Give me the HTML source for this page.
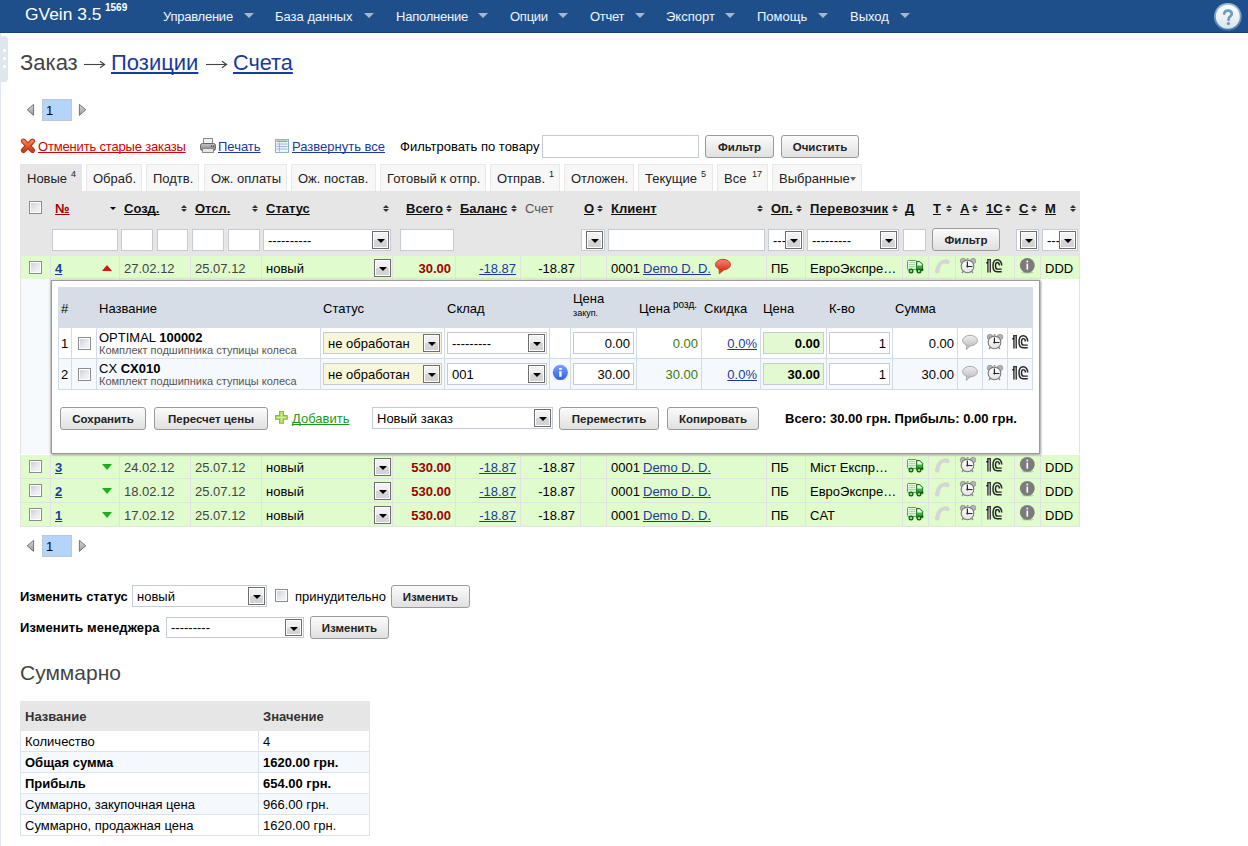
<!DOCTYPE html><html><head><meta charset="utf-8"><style>
html,body{margin:0;padding:0;}
body{width:1248px;height:846px;overflow:hidden;position:relative;background:#fff;font-family:"Liberation Sans",sans-serif;}
.t{position:absolute;white-space:nowrap;text-decoration-skip-ink:none;}
.r{position:absolute;}
.cb{position:absolute;width:11px;height:11px;border:1px solid #8c8c8c;background:linear-gradient(135deg,#c6cbd6 0%,#e6e8ec 50%,#f7f7f7 100%);box-shadow:inset 0 0 0 1px #fff;}
.sb{position:absolute;border:1px solid #6d6d6d;background:linear-gradient(#f4f4f4 0%,#ececec 50%,#d6d6d6 51%,#d2d2d2 100%);box-shadow:inset 0 0 0 1px #fff;}
.sb i{position:absolute;left:50%;top:50%;margin-left:-4px;margin-top:-1px;width:0;height:0;border-left:4px solid transparent;border-right:4px solid transparent;border-top:4px solid #000;}
.btn{position:absolute;box-sizing:border-box;border:1px solid #9a9a9a;border-radius:3px;background:linear-gradient(#fbfbfb,#e0e0e0);text-align:center;font-weight:bold;color:#222;white-space:nowrap;}
a{color:inherit}
</style></head><body><div class="r" style="left:0px;top:0px;width:1248px;height:33px;background:#1f4f8a;"></div>
<div class="r" style="left:0px;top:32px;width:1248px;height:1px;background:#15427a;"></div>
<div class="t " style="left:25px;top:4px;font-size:17.4px;line-height:20px;color:#fff;">GVein 3.5</div>
<div class="t " style="left:105px;top:2px;font-size:10px;line-height:11px;color:#fff;font-weight:bold;">1569</div>
<div class="t " style="left:163px;top:9px;font-size:13px;line-height:15px;color:#f2f5f9;letter-spacing:-0.24px;">Управление</div>
<div class="r" style="left:244px;top:13px;width:0;height:0;border-left:5.0px solid transparent;border-right:5.0px solid transparent;border-top:5px solid #a6b8d0;"></div>
<div class="t " style="left:275px;top:9px;font-size:13px;line-height:15px;color:#f2f5f9;">База данных</div>
<div class="r" style="left:364px;top:13px;width:0;height:0;border-left:5.0px solid transparent;border-right:5.0px solid transparent;border-top:5px solid #a6b8d0;"></div>
<div class="t " style="left:396px;top:9px;font-size:13px;line-height:15px;color:#f2f5f9;letter-spacing:-0.22px;">Наполнение</div>
<div class="r" style="left:478px;top:13px;width:0;height:0;border-left:5.0px solid transparent;border-right:5.0px solid transparent;border-top:5px solid #a6b8d0;"></div>
<div class="t " style="left:510px;top:9px;font-size:13px;line-height:15px;color:#f2f5f9;letter-spacing:-0.25px;">Опции</div>
<div class="r" style="left:558px;top:13px;width:0;height:0;border-left:5.0px solid transparent;border-right:5.0px solid transparent;border-top:5px solid #a6b8d0;"></div>
<div class="t " style="left:590px;top:9px;font-size:13px;line-height:15px;color:#f2f5f9;letter-spacing:-0.3px;">Отчет</div>
<div class="r" style="left:635px;top:13px;width:0;height:0;border-left:5.0px solid transparent;border-right:5.0px solid transparent;border-top:5px solid #a6b8d0;"></div>
<div class="t " style="left:666px;top:9px;font-size:13px;line-height:15px;color:#f2f5f9;">Экспорт</div>
<div class="r" style="left:725px;top:13px;width:0;height:0;border-left:5.0px solid transparent;border-right:5.0px solid transparent;border-top:5px solid #a6b8d0;"></div>
<div class="t " style="left:757px;top:9px;font-size:13px;line-height:15px;color:#f2f5f9;">Помощь</div>
<div class="r" style="left:818px;top:13px;width:0;height:0;border-left:5.0px solid transparent;border-right:5.0px solid transparent;border-top:5px solid #a6b8d0;"></div>
<div class="t " style="left:850px;top:9px;font-size:13px;line-height:15px;color:#f2f5f9;">Выход</div>
<div class="r" style="left:900px;top:13px;width:0;height:0;border-left:5.0px solid transparent;border-right:5.0px solid transparent;border-top:5px solid #a6b8d0;"></div>
<svg class="r" style="left:1212px;top:2px" width="31" height="31" viewBox="0 0 31 31"><defs><linearGradient id="hr" x1="0" y1="0" x2="0" y2="1"><stop offset="0" stop-color="#9dc0de"/><stop offset="1" stop-color="#3f74a8"/></linearGradient><linearGradient id="hf" x1="0" y1="0" x2="0" y2="1"><stop offset="0" stop-color="#ffffff"/><stop offset="1" stop-color="#d8e4ee"/></linearGradient></defs><circle cx="15.8" cy="14.8" r="13.9" fill="url(#hr)"/><circle cx="15.8" cy="14.8" r="12" fill="url(#hf)"/><path d="M12.2 11.8 C12.2 9.4 13.8 8.6 15.9 8.6 C18.2 8.6 19.8 9.8 19.8 11.8 C19.8 13.8 18 14.4 17 15.7 C16.6 16.3 16.5 16.9 16.5 18" fill="none" stroke="#6c9cc6" stroke-width="2.6" stroke-linecap="round"/><circle cx="16.4" cy="21.6" r="1.6" fill="#6c9cc6"/></svg>
<div class="r" style="left:0px;top:33px;width:1px;height:813px;background:#dfe6ee;"></div>
<div class="r" style="left:0px;top:36px;width:8px;height:46px;background:#dfe6ee;border-radius:0 4px 4px 0;"></div>
<div class="r" style="left:3px;top:49px;width:3px;height:3px;background:#fff;border-radius:1px;"></div>
<div class="r" style="left:3px;top:57px;width:3px;height:3px;background:#fff;border-radius:1px;"></div>
<div class="r" style="left:3px;top:65px;width:3px;height:3px;background:#fff;border-radius:1px;"></div>
<div class="t " style="left:20px;top:50px;font-size:22px;line-height:25px;color:#444;">Заказ</div>
<div class="t " style="left:111px;top:50px;font-size:22px;line-height:25px;color:#1a3a9e;text-decoration:underline;">Позиции</div>
<div class="t " style="left:233px;top:50px;font-size:21.7px;line-height:25px;color:#1a3a9e;text-decoration:underline;">Счета</div>
<svg class="r" style="left:83.5px;top:58px" width="22" height="14" viewBox="0 0 22 14"><line x1="0" y1="6.5" x2="20.5" y2="6.5" stroke="#444" stroke-width="1.1"/><polyline points="16,3.2 20.6,6.5 16,9.8" fill="none" stroke="#444" stroke-width="1.2"/></svg>
<svg class="r" style="left:205.5px;top:58px" width="22" height="14" viewBox="0 0 22 14"><line x1="0" y1="6.5" x2="20.5" y2="6.5" stroke="#444" stroke-width="1.1"/><polyline points="16,3.2 20.6,6.5 16,9.8" fill="none" stroke="#444" stroke-width="1.2"/></svg>
<svg class="r" style="left:22px;top:99px" width="70" height="22" viewBox="0 0 70 22"><defs><linearGradient id="pga" x1="0" y1="0" x2="0" y2="1"><stop offset="0" stop-color="#d8d8d8"/><stop offset="1" stop-color="#9a9a9a"/></linearGradient></defs><polygon points="11.6,5.4 5.2,10.8 11.6,16.4" fill="url(#pga)" stroke="#6a6a6a" stroke-width="0.9" stroke-linejoin="round"/><polygon points="57.4,5.4 63.8,10.8 57.4,16.4" fill="url(#pga)" stroke="#6a6a6a" stroke-width="0.9" stroke-linejoin="round"/></svg>
<div class="r" style="left:42px;top:99px;width:30px;height:22px;background:#b4d4fa;border:1px solid #bfc8d2;box-sizing:border-box;"></div>
<div class="t " style="left:46px;top:103px;font-size:13px;line-height:15px;color:#000;">1</div>
<svg class="r" style="left:19px;top:136px" width="20" height="20" viewBox="0 0 20 20"><defs><linearGradient id="xg" x1="0" y1="0" x2="0" y2="1"><stop offset="0" stop-color="#f08050"/><stop offset="1" stop-color="#d03c18"/></linearGradient></defs><g stroke-linecap="round"><line x1="4.4" y1="5.2" x2="13.5" y2="14.4" stroke="#b8301a" stroke-width="5.2"/><line x1="13.5" y1="5.2" x2="4.4" y2="14.4" stroke="#b8301a" stroke-width="5.2"/><line x1="4.4" y1="5.2" x2="13.5" y2="14.4" stroke="url(#xg)" stroke-width="3.2"/><line x1="13.5" y1="5.2" x2="4.4" y2="14.4" stroke="url(#xg)" stroke-width="3.2"/></g></svg>
<div class="t " style="left:38px;top:139px;font-size:13px;line-height:15px;color:#d40000;text-decoration:underline;letter-spacing:-0.17px;">Отменить старые заказы</div>
<svg class="r" style="left:200px;top:138px" width="18" height="17" viewBox="0 0 18 17"><defs><linearGradient id="pg" x1="0" y1="0" x2="0" y2="1"><stop offset="0" stop-color="#c8c8c8"/><stop offset="1" stop-color="#7a7a7a"/></linearGradient></defs><rect x="3.5" y="0.5" width="9" height="6" fill="#f2f2f2" stroke="#8a8a8a"/><rect x="0.5" y="5.5" width="15" height="7" rx="2" fill="url(#pg)" stroke="#666"/><rect x="2.5" y="10.5" width="11" height="4" fill="#e6e6e6" stroke="#8a8a8a"/><rect x="11" y="7.5" width="1.2" height="1.2" fill="#333"/><rect x="13" y="7.5" width="1.2" height="1.2" fill="#333"/></svg>
<div class="t " style="left:218px;top:139px;font-size:13px;line-height:15px;color:#1a3a9e;text-decoration:underline;">Печать</div>
<svg class="r" style="left:275px;top:139px" width="15" height="15" viewBox="0 0 15 15"><rect x="0.5" y="0.5" width="13" height="13" fill="#eef4fb" stroke="#8eb0da"/><rect x="1.5" y="1.5" width="11" height="1.5" fill="#72c05e"/><g stroke="#9bb8de" stroke-width="1"><line x1="1.5" y1="5" x2="12.5" y2="5"/><line x1="1.5" y1="7.5" x2="12.5" y2="7.5"/><line x1="1.5" y1="10" x2="12.5" y2="10"/><line x1="4.5" y1="3.5" x2="4.5" y2="12.5"/></g></svg>
<div class="t " style="left:292px;top:139px;font-size:13px;line-height:15px;color:#1a3a9e;text-decoration:underline;">Развернуть все</div>
<div class="t " style="left:400px;top:139px;font-size:13px;line-height:15px;color:#000;">Фильтровать по товару</div>
<div class="r" style="left:542px;top:135px;width:157px;height:23px;background:#fff;border:1px solid #c5cbd3;box-sizing:border-box;"></div>
<div class="btn" style="left:705px;top:135px;width:69px;height:23px;line-height:23px;font-size:11.5px;">Фильтр</div>
<div class="btn" style="left:781px;top:135px;width:78px;height:23px;line-height:23px;font-size:11.5px;">Очистить</div>
<div class="r" style="left:20px;top:164px;width:62px;height:27px;background:#e6e6e6;"></div>
<div class="t " style="left:27px;top:171px;font-size:13px;line-height:15px;color:#222;">Новые</div>
<div class="r" style="left:86px;top:164px;width:56px;height:27px;background:#f7f7f7;border:1px solid #e8e8e8;border-bottom:none;box-sizing:border-box;"></div>
<div class="t " style="left:93px;top:171px;font-size:13px;line-height:15px;color:#222;">Обраб.</div>
<div class="r" style="left:146px;top:164px;width:53px;height:27px;background:#f7f7f7;border:1px solid #e8e8e8;border-bottom:none;box-sizing:border-box;"></div>
<div class="t " style="left:153px;top:171px;font-size:13px;line-height:15px;color:#222;">Подтв.</div>
<div class="r" style="left:204px;top:164px;width:83px;height:27px;background:#f7f7f7;border:1px solid #e8e8e8;border-bottom:none;box-sizing:border-box;"></div>
<div class="t " style="left:211px;top:171px;font-size:13px;line-height:15px;color:#222;">Ож. оплаты</div>
<div class="r" style="left:291px;top:164px;width:85px;height:27px;background:#f7f7f7;border:1px solid #e8e8e8;border-bottom:none;box-sizing:border-box;"></div>
<div class="t " style="left:298px;top:171px;font-size:13px;line-height:15px;color:#222;">Ож. постав.</div>
<div class="r" style="left:380px;top:164px;width:106px;height:27px;background:#f7f7f7;border:1px solid #e8e8e8;border-bottom:none;box-sizing:border-box;"></div>
<div class="t " style="left:387px;top:171px;font-size:13px;line-height:15px;color:#222;">Готовый к отпр.</div>
<div class="r" style="left:490px;top:164px;width:70px;height:27px;background:#f7f7f7;border:1px solid #e8e8e8;border-bottom:none;box-sizing:border-box;"></div>
<div class="t " style="left:497px;top:171px;font-size:13px;line-height:15px;color:#222;">Отправ.</div>
<div class="r" style="left:564px;top:164px;width:70px;height:27px;background:#f7f7f7;border:1px solid #e8e8e8;border-bottom:none;box-sizing:border-box;"></div>
<div class="t " style="left:571px;top:171px;font-size:13px;line-height:15px;color:#222;">Отложен.</div>
<div class="r" style="left:638px;top:164px;width:75px;height:27px;background:#f7f7f7;border:1px solid #e8e8e8;border-bottom:none;box-sizing:border-box;"></div>
<div class="t " style="left:645px;top:171px;font-size:13px;line-height:15px;color:#222;">Текущие</div>
<div class="r" style="left:717px;top:164px;width:51px;height:27px;background:#f7f7f7;border:1px solid #e8e8e8;border-bottom:none;box-sizing:border-box;"></div>
<div class="t " style="left:724px;top:171px;font-size:13px;line-height:15px;color:#222;">Все</div>
<div class="r" style="left:772px;top:164px;width:90px;height:27px;background:#f7f7f7;border:1px solid #e8e8e8;border-bottom:none;box-sizing:border-box;"></div>
<div class="t " style="left:779px;top:171px;font-size:13px;line-height:15px;color:#222;">Выбранные</div>
<div class="t " style="left:71px;top:169px;font-size:9px;line-height:10px;color:#222;">4</div>
<div class="t " style="left:549px;top:169px;font-size:9px;line-height:10px;color:#222;">1</div>
<div class="t " style="left:701px;top:169px;font-size:9px;line-height:10px;color:#222;">5</div>
<div class="t " style="left:752px;top:169px;font-size:9px;line-height:10px;color:#222;">17</div>
<div class="r" style="left:850px;top:177px;width:0;height:0;border-left:3.5px solid transparent;border-right:3.5px solid transparent;border-top:4px solid #666;"></div>
<div class="r" style="left:20px;top:191px;width:1060px;height:65px;background:#e6e6e6;"></div>
<div class="cb" style="left:29px;top:201px;"></div>
<div class="t " style="left:55px;top:201px;font-size:13px;line-height:15px;color:#a00000;font-weight:bold;text-decoration:underline;">№</div>
<div class="r" style="left:110px;top:207px;width:0;height:0;border-left:3.0px solid transparent;border-right:3.0px solid transparent;border-top:3px solid #000;"></div>
<div class="t " style="left:124px;top:201px;font-size:13px;line-height:15px;color:#111;font-weight:bold;text-decoration:underline;">Созд.</div>
<div class="r" style="left:181px;top:205px;width:0;height:0;border-left:3.0px solid transparent;border-right:3.0px solid transparent;border-bottom:3px solid #333;"></div>
<div class="r" style="left:181px;top:209px;width:0;height:0;border-left:3.0px solid transparent;border-right:3.0px solid transparent;border-top:3px solid #333;"></div>
<div class="t " style="left:195px;top:201px;font-size:13px;line-height:15px;color:#111;font-weight:bold;text-decoration:underline;">Отсл.</div>
<div class="r" style="left:252px;top:205px;width:0;height:0;border-left:3.0px solid transparent;border-right:3.0px solid transparent;border-bottom:3px solid #333;"></div>
<div class="r" style="left:252px;top:209px;width:0;height:0;border-left:3.0px solid transparent;border-right:3.0px solid transparent;border-top:3px solid #333;"></div>
<div class="t " style="left:266px;top:201px;font-size:13px;line-height:15px;color:#111;font-weight:bold;text-decoration:underline;">Статус</div>
<div class="r" style="left:383px;top:205px;width:0;height:0;border-left:3.0px solid transparent;border-right:3.0px solid transparent;border-bottom:3px solid #333;"></div>
<div class="r" style="left:383px;top:209px;width:0;height:0;border-left:3.0px solid transparent;border-right:3.0px solid transparent;border-top:3px solid #333;"></div>
<div class="t " style="left:406px;top:201px;font-size:13px;line-height:15px;color:#111;font-weight:bold;text-decoration:underline;">Всего</div>
<div class="r" style="left:446px;top:205px;width:0;height:0;border-left:3.0px solid transparent;border-right:3.0px solid transparent;border-bottom:3px solid #333;"></div>
<div class="r" style="left:446px;top:209px;width:0;height:0;border-left:3.0px solid transparent;border-right:3.0px solid transparent;border-top:3px solid #333;"></div>
<div class="t " style="left:460px;top:201px;font-size:13px;line-height:15px;color:#111;font-weight:bold;text-decoration:underline;">Баланс</div>
<div class="r" style="left:511px;top:205px;width:0;height:0;border-left:3.0px solid transparent;border-right:3.0px solid transparent;border-bottom:3px solid #333;"></div>
<div class="r" style="left:511px;top:209px;width:0;height:0;border-left:3.0px solid transparent;border-right:3.0px solid transparent;border-top:3px solid #333;"></div>
<div class="t " style="left:584px;top:201px;font-size:13px;line-height:15px;color:#111;font-weight:bold;text-decoration:underline;">О</div>
<div class="r" style="left:597px;top:205px;width:0;height:0;border-left:3.0px solid transparent;border-right:3.0px solid transparent;border-bottom:3px solid #333;"></div>
<div class="r" style="left:597px;top:209px;width:0;height:0;border-left:3.0px solid transparent;border-right:3.0px solid transparent;border-top:3px solid #333;"></div>
<div class="t " style="left:611px;top:201px;font-size:13px;line-height:15px;color:#111;font-weight:bold;text-decoration:underline;">Клиент</div>
<div class="r" style="left:757px;top:205px;width:0;height:0;border-left:3.0px solid transparent;border-right:3.0px solid transparent;border-bottom:3px solid #333;"></div>
<div class="r" style="left:757px;top:209px;width:0;height:0;border-left:3.0px solid transparent;border-right:3.0px solid transparent;border-top:3px solid #333;"></div>
<div class="t " style="left:771px;top:201px;font-size:13px;line-height:15px;color:#111;font-weight:bold;text-decoration:underline;">Оп.</div>
<div class="r" style="left:796px;top:205px;width:0;height:0;border-left:3.0px solid transparent;border-right:3.0px solid transparent;border-bottom:3px solid #333;"></div>
<div class="r" style="left:796px;top:209px;width:0;height:0;border-left:3.0px solid transparent;border-right:3.0px solid transparent;border-top:3px solid #333;"></div>
<div class="t " style="left:810px;top:201px;font-size:13px;line-height:15px;color:#111;font-weight:bold;text-decoration:underline;letter-spacing:0.3px;">Перевозчик</div>
<div class="r" style="left:892px;top:205px;width:0;height:0;border-left:3.0px solid transparent;border-right:3.0px solid transparent;border-bottom:3px solid #333;"></div>
<div class="r" style="left:892px;top:209px;width:0;height:0;border-left:3.0px solid transparent;border-right:3.0px solid transparent;border-top:3px solid #333;"></div>
<div class="t " style="left:905px;top:201px;font-size:13px;line-height:15px;color:#111;font-weight:bold;text-decoration:underline;">Д</div>
<div class="t " style="left:933px;top:201px;font-size:13px;line-height:15px;color:#111;font-weight:bold;text-decoration:underline;">Т</div>
<div class="r" style="left:946px;top:205px;width:0;height:0;border-left:3.0px solid transparent;border-right:3.0px solid transparent;border-bottom:3px solid #333;"></div>
<div class="r" style="left:946px;top:209px;width:0;height:0;border-left:3.0px solid transparent;border-right:3.0px solid transparent;border-top:3px solid #333;"></div>
<div class="t " style="left:960px;top:201px;font-size:13px;line-height:15px;color:#111;font-weight:bold;text-decoration:underline;">А</div>
<div class="r" style="left:972px;top:205px;width:0;height:0;border-left:3.0px solid transparent;border-right:3.0px solid transparent;border-bottom:3px solid #333;"></div>
<div class="r" style="left:972px;top:209px;width:0;height:0;border-left:3.0px solid transparent;border-right:3.0px solid transparent;border-top:3px solid #333;"></div>
<div class="t " style="left:986px;top:201px;font-size:13px;line-height:15px;color:#111;font-weight:bold;text-decoration:underline;">1С</div>
<div class="r" style="left:1005px;top:205px;width:0;height:0;border-left:3.0px solid transparent;border-right:3.0px solid transparent;border-bottom:3px solid #333;"></div>
<div class="r" style="left:1005px;top:209px;width:0;height:0;border-left:3.0px solid transparent;border-right:3.0px solid transparent;border-top:3px solid #333;"></div>
<div class="t " style="left:1019px;top:201px;font-size:13px;line-height:15px;color:#111;font-weight:bold;text-decoration:underline;">С</div>
<div class="r" style="left:1031px;top:205px;width:0;height:0;border-left:3.0px solid transparent;border-right:3.0px solid transparent;border-bottom:3px solid #333;"></div>
<div class="r" style="left:1031px;top:209px;width:0;height:0;border-left:3.0px solid transparent;border-right:3.0px solid transparent;border-top:3px solid #333;"></div>
<div class="t " style="left:1045px;top:201px;font-size:13px;line-height:15px;color:#111;font-weight:bold;text-decoration:underline;">М</div>
<div class="r" style="left:1070px;top:205px;width:0;height:0;border-left:3.0px solid transparent;border-right:3.0px solid transparent;border-bottom:3px solid #333;"></div>
<div class="r" style="left:1070px;top:209px;width:0;height:0;border-left:3.0px solid transparent;border-right:3.0px solid transparent;border-top:3px solid #333;"></div>
<div class="t " style="left:525px;top:201px;font-size:13px;line-height:15px;color:#555;">Счет</div>
<div class="r" style="left:52px;top:229px;width:66px;height:22px;background:#fff;border:1px solid #c5cbd3;box-sizing:border-box;"></div>
<div class="r" style="left:121px;top:229px;width:32px;height:22px;background:#fff;border:1px solid #c5cbd3;box-sizing:border-box;"></div>
<div class="r" style="left:157px;top:229px;width:31px;height:22px;background:#fff;border:1px solid #c5cbd3;box-sizing:border-box;"></div>
<div class="r" style="left:192px;top:229px;width:32px;height:22px;background:#fff;border:1px solid #c5cbd3;box-sizing:border-box;"></div>
<div class="r" style="left:228px;top:229px;width:32px;height:22px;background:#fff;border:1px solid #c5cbd3;box-sizing:border-box;"></div>
<div class="r" style="left:263px;top:229px;width:128px;height:22px;background:#fff;border:1px solid #c5cbd3;box-sizing:border-box;"></div>
<div class="t " style="left:268px;top:233px;font-size:13px;line-height:15px;color:#000;">----------</div>
<div class="sb" style="left:372px;top:231px;width:15px;height:16px;"><i></i></div>
<div class="r" style="left:400px;top:229px;width:54px;height:22px;background:#fff;border:1px solid #c5cbd3;box-sizing:border-box;"></div>
<div class="r" style="left:581px;top:229px;width:24px;height:22px;background:#fff;border:1px solid #c5cbd3;box-sizing:border-box;"></div>
<div class="sb" style="left:586px;top:231px;width:15px;height:16px;"><i></i></div>
<div class="r" style="left:608px;top:229px;width:157px;height:22px;background:#fff;border:1px solid #c5cbd3;box-sizing:border-box;"></div>
<div class="r" style="left:768px;top:229px;width:36px;height:22px;background:#fff;border:1px solid #c5cbd3;box-sizing:border-box;"></div>
<div class="t " style="left:773px;top:233px;font-size:13px;line-height:15px;color:#000;">---</div>
<div class="sb" style="left:785px;top:231px;width:15px;height:16px;"><i></i></div>
<div class="r" style="left:807px;top:229px;width:92px;height:22px;background:#fff;border:1px solid #c5cbd3;box-sizing:border-box;"></div>
<div class="t " style="left:812px;top:233px;font-size:13px;line-height:15px;color:#000;">---------</div>
<div class="sb" style="left:880px;top:231px;width:15px;height:16px;"><i></i></div>
<div class="r" style="left:903px;top:229px;width:23px;height:22px;background:#fff;border:1px solid #c5cbd3;box-sizing:border-box;"></div>
<div class="btn" style="left:932px;top:228px;width:68px;height:23px;line-height:23px;font-size:11.5px;">Фильтр</div>
<div class="r" style="left:1016px;top:229px;width:23px;height:22px;background:#fff;border:1px solid #c5cbd3;box-sizing:border-box;"></div>
<div class="sb" style="left:1020px;top:231px;width:15px;height:16px;"><i></i></div>
<div class="r" style="left:1042px;top:229px;width:36px;height:22px;background:#fff;border:1px solid #c5cbd3;box-sizing:border-box;"></div>
<div class="t " style="left:1047px;top:233px;font-size:13px;line-height:15px;color:#000;">---</div>
<div class="sb" style="left:1059px;top:231px;width:15px;height:16px;"><i></i></div>
<div class="r" style="left:20px;top:256px;width:1060px;height:24px;background:#e0fbcc;"></div>
<div class="r" style="left:20px;top:279px;width:1060px;height:1px;background:#e2e2e2;"></div>
<div class="r" style="left:50px;top:256px;width:1px;height:23px;background:#e2e2e2;"></div>
<div class="r" style="left:119px;top:256px;width:1px;height:23px;background:#e2e2e2;"></div>
<div class="r" style="left:190px;top:256px;width:1px;height:23px;background:#e2e2e2;"></div>
<div class="r" style="left:261px;top:256px;width:1px;height:23px;background:#e2e2e2;"></div>
<div class="r" style="left:392px;top:256px;width:1px;height:23px;background:#e2e2e2;"></div>
<div class="r" style="left:455px;top:256px;width:1px;height:23px;background:#e2e2e2;"></div>
<div class="r" style="left:520px;top:256px;width:1px;height:23px;background:#e2e2e2;"></div>
<div class="r" style="left:580px;top:256px;width:1px;height:23px;background:#e2e2e2;"></div>
<div class="r" style="left:606px;top:256px;width:1px;height:23px;background:#e2e2e2;"></div>
<div class="r" style="left:766px;top:256px;width:1px;height:23px;background:#e2e2e2;"></div>
<div class="r" style="left:805px;top:256px;width:1px;height:23px;background:#e2e2e2;"></div>
<div class="r" style="left:902px;top:256px;width:1px;height:23px;background:#e2e2e2;"></div>
<div class="r" style="left:928px;top:256px;width:1px;height:23px;background:#e2e2e2;"></div>
<div class="r" style="left:955px;top:256px;width:1px;height:23px;background:#e2e2e2;"></div>
<div class="r" style="left:981px;top:256px;width:1px;height:23px;background:#e2e2e2;"></div>
<div class="r" style="left:1014px;top:256px;width:1px;height:23px;background:#e2e2e2;"></div>
<div class="r" style="left:1040px;top:256px;width:1px;height:23px;background:#e2e2e2;"></div>
<div class="r" style="left:20px;top:256px;width:1px;height:24px;background:#e2e2e2;"></div>
<div class="r" style="left:1079px;top:256px;width:1px;height:24px;background:#e2e2e2;"></div>
<div class="cb" style="left:29px;top:261px;"></div>
<div class="t " style="left:55px;top:261px;font-size:13px;line-height:15px;color:#1a3a9e;font-weight:bold;text-decoration:underline;">4</div>
<div class="r" style="left:102px;top:265px;width:0;height:0;border-left:5.0px solid transparent;border-right:5.0px solid transparent;border-bottom:6px solid #e01010;"></div>
<div class="t " style="left:124px;top:261px;font-size:13px;line-height:15px;color:#444;">27.02.12</div>
<div class="t " style="left:195px;top:261px;font-size:13px;line-height:15px;color:#444;">25.07.12</div>
<div class="t " style="left:266px;top:261px;font-size:13px;line-height:15px;color:#000;">новый</div>
<div class="sb" style="left:374px;top:259px;width:15px;height:16px;"><i></i></div>
<div class="t " style="right:797px;top:261px;font-size:13px;line-height:15px;color:#a00000;font-weight:bold;">30.00</div>
<div class="t " style="right:732px;top:261px;font-size:13px;line-height:15px;color:#1a3a9e;text-decoration:underline;">-18.87</div>
<div class="t " style="right:673px;top:261px;font-size:13px;line-height:15px;color:#000;">-18.87</div>
<div class="t " style="left:611px;top:261px;font-size:13px;line-height:15px;color:#000;">0001</div>
<div class="t " style="left:643px;top:261px;font-size:13px;line-height:15px;color:#1a3a9e;text-decoration:underline;">Demo D. D.</div>
<svg class="r" style="left:712px;top:256px" width="22" height="20" viewBox="0 0 22 20"><defs><linearGradient id="rb" x1="0" y1="0" x2="0" y2="1"><stop offset="0" stop-color="#f4857a"/><stop offset="1" stop-color="#e0381e"/></linearGradient></defs><path d="M7 13 L7.3 17.8 L11.5 14.2 Z" fill="#e0381e" stroke="#b83010" stroke-width="0.7" stroke-linejoin="round"/><ellipse cx="11" cy="8.6" rx="7.5" ry="5.3" fill="url(#rb)" stroke="#c0381a" stroke-width="0.9"/><path d="M7 13.2 L7.4 16.8 L11 13.8 Z" fill="#e03a20"/></svg>
<div class="t " style="left:771px;top:261px;font-size:13px;line-height:15px;color:#000;">ПБ</div>
<div class="t " style="left:810px;top:261px;font-size:13px;line-height:15px;color:#000;">ЕвроЭкспре…</div>
<svg class="r" style="left:904px;top:256px" width="22" height="20" viewBox="0 0 22 20"><defs><linearGradient id="tb" x1="0" y1="0" x2="0" y2="1"><stop offset="0" stop-color="#ffffff"/><stop offset="1" stop-color="#c8ecc8"/></linearGradient><linearGradient id="tc" x1="0" y1="0" x2="0" y2="1"><stop offset="0" stop-color="#5cc85c"/><stop offset="1" stop-color="#2a9a2a"/></linearGradient></defs><rect x="3.5" y="4.5" width="9" height="9" rx="1" fill="url(#tb)" stroke="#40b040"/><g stroke="#9ddc9d" stroke-width="1"><line x1="5" y1="6.5" x2="11" y2="6.5"/><line x1="5" y1="8.5" x2="11" y2="8.5"/><line x1="5" y1="10.5" x2="11" y2="10.5"/></g><path d="M12.5 5.5 H15.8 L18.6 8.3 V14.5 H12.5 Z" fill="url(#tc)" stroke="#1f7a1f"/><path d="M13.3 6.3 H15.5 L17.8 8.6 V9.4 H13.3 Z" fill="#fff"/><circle cx="7" cy="15" r="1.9" fill="#72de72" stroke="#145c14" stroke-width="1.2"/><circle cx="15" cy="15" r="1.9" fill="#72de72" stroke="#145c14" stroke-width="1.2"/><rect x="17.6" y="12.6" width="1.6" height="1.9" fill="#0a3a0a"/></svg>
<svg class="r" style="left:930px;top:256px" width="22" height="20" viewBox="0 0 22 20"><g fill="#d6d6d6"><path d="M16 5.4 C11.5 4.8 8 8.8 7.3 14.4" fill="none" stroke="#d6d6d6" stroke-width="3.8" stroke-linecap="round"/><ellipse cx="16.6" cy="5.7" rx="3" ry="2.3" transform="rotate(20 16.6 5.7)"/><ellipse cx="7.4" cy="14.6" rx="2.3" ry="3" transform="rotate(20 7.4 14.6)"/></g></svg>
<svg class="r" style="left:957px;top:255px" width="22" height="21" viewBox="0 0 22 21"><defs><linearGradient id="af" x1="0" y1="0" x2="0" y2="1"><stop offset="0" stop-color="#ffffff"/><stop offset="1" stop-color="#e2e2e2"/></linearGradient></defs><ellipse cx="6" cy="6" rx="2.8" ry="2.7" fill="#b4b4b4" stroke="#8c8c8c" stroke-width="0.7"/><ellipse cx="16" cy="6" rx="2.8" ry="2.7" fill="#b4b4b4" stroke="#8c8c8c" stroke-width="0.7"/><rect x="9.8" y="3" width="1.6" height="1.5" fill="#999"/><line x1="7" y1="15.5" x2="5" y2="18" stroke="#8a8a8a" stroke-width="1.3"/><line x1="14" y1="15.5" x2="16" y2="18" stroke="#8a8a8a" stroke-width="1.3"/><circle cx="10.5" cy="11.4" r="6.3" fill="url(#af)" stroke="#7a7a7a" stroke-width="1.1"/><path d="M10.4 6.4 V11.5 H15.5" fill="none" stroke="#2a2a2a" stroke-width="1.2"/><circle cx="10.4" cy="11.5" r="1" fill="#222"/></svg>
<svg class="r" style="left:984px;top:256px" width="20" height="20" viewBox="0 0 20 20"><rect x="3.3" y="3.1" width="3.6" height="13.4" fill="#b0b0b0"/><rect x="3.3" y="3.1" width="1.1" height="13.4" fill="#333"/><rect x="5.8" y="3.1" width="1.1" height="13.4" fill="#333"/><rect x="3.3" y="3.1" width="3.6" height="1.2" fill="#2e2e2e"/><path d="M2.2 6.2 L4 5.4 L4.2 7.4 L2.4 7.6 Z" fill="#111"/><path d="M17.7 9.6 C17.7 5.6 15.6 3.8 13.2 3.8 C10.3 3.8 9 6.4 9 10 C9 13.4 10.3 15.8 13.2 15.8 H17.7" fill="none" stroke="#262626" stroke-width="1.45"/><path d="M15.4 9.6 C15.4 7.6 14.5 6.6 13.2 6.6 C11.9 6.6 11.5 8.2 11.5 9.9 C11.5 11.7 12.2 13.1 13.6 13.1 H17.7" fill="none" stroke="#262626" stroke-width="1.45"/></svg>
<svg class="r" style="left:1019px;top:257px" width="18" height="18" viewBox="0 0 18 18"><ellipse cx="8.5" cy="15.6" rx="6.5" ry="0.9" fill="#9ab08a" opacity="0.5"/><circle cx="8.3" cy="8.4" r="7.4" fill="#7b7b7b"/><rect x="7.5" y="3.6" width="1.6" height="1.8" fill="#fff"/><rect x="7.5" y="6.6" width="1.6" height="6" fill="#fff"/></svg>
<div class="t " style="left:1045px;top:261px;font-size:13px;line-height:15px;color:#000;">DDD</div>
<div class="r" style="left:20px;top:279px;width:1060px;height:175px;background:#fff;"></div>
<div class="r" style="left:20px;top:279px;width:31px;height:175px;background:#f6fafd;"></div>
<div class="r" style="left:20px;top:279px;width:1px;height:175px;background:#e2e2e2;"></div>
<div class="r" style="left:50px;top:279px;width:1px;height:175px;background:#e2e2e2;"></div>
<div class="r" style="left:1079px;top:279px;width:1px;height:175px;background:#e2e2e2;"></div>
<div class="r" style="left:20px;top:455px;width:1060px;height:24px;background:#e0fbcc;"></div>
<div class="r" style="left:20px;top:478px;width:1060px;height:1px;background:#e2e2e2;"></div>
<div class="r" style="left:50px;top:455px;width:1px;height:23px;background:#e2e2e2;"></div>
<div class="r" style="left:119px;top:455px;width:1px;height:23px;background:#e2e2e2;"></div>
<div class="r" style="left:190px;top:455px;width:1px;height:23px;background:#e2e2e2;"></div>
<div class="r" style="left:261px;top:455px;width:1px;height:23px;background:#e2e2e2;"></div>
<div class="r" style="left:392px;top:455px;width:1px;height:23px;background:#e2e2e2;"></div>
<div class="r" style="left:455px;top:455px;width:1px;height:23px;background:#e2e2e2;"></div>
<div class="r" style="left:520px;top:455px;width:1px;height:23px;background:#e2e2e2;"></div>
<div class="r" style="left:580px;top:455px;width:1px;height:23px;background:#e2e2e2;"></div>
<div class="r" style="left:606px;top:455px;width:1px;height:23px;background:#e2e2e2;"></div>
<div class="r" style="left:766px;top:455px;width:1px;height:23px;background:#e2e2e2;"></div>
<div class="r" style="left:805px;top:455px;width:1px;height:23px;background:#e2e2e2;"></div>
<div class="r" style="left:902px;top:455px;width:1px;height:23px;background:#e2e2e2;"></div>
<div class="r" style="left:928px;top:455px;width:1px;height:23px;background:#e2e2e2;"></div>
<div class="r" style="left:955px;top:455px;width:1px;height:23px;background:#e2e2e2;"></div>
<div class="r" style="left:981px;top:455px;width:1px;height:23px;background:#e2e2e2;"></div>
<div class="r" style="left:1014px;top:455px;width:1px;height:23px;background:#e2e2e2;"></div>
<div class="r" style="left:1040px;top:455px;width:1px;height:23px;background:#e2e2e2;"></div>
<div class="r" style="left:20px;top:455px;width:1px;height:24px;background:#e2e2e2;"></div>
<div class="r" style="left:1079px;top:455px;width:1px;height:24px;background:#e2e2e2;"></div>
<div class="cb" style="left:29px;top:460px;"></div>
<div class="t " style="left:55px;top:460px;font-size:13px;line-height:15px;color:#1a3a9e;font-weight:bold;text-decoration:underline;">3</div>
<div class="r" style="left:102px;top:464px;width:0;height:0;border-left:5.0px solid transparent;border-right:5.0px solid transparent;border-top:6px solid #1fae1f;"></div>
<div class="t " style="left:124px;top:460px;font-size:13px;line-height:15px;color:#444;">24.02.12</div>
<div class="t " style="left:195px;top:460px;font-size:13px;line-height:15px;color:#444;">25.07.12</div>
<div class="t " style="left:266px;top:460px;font-size:13px;line-height:15px;color:#000;">новый</div>
<div class="sb" style="left:374px;top:458px;width:15px;height:16px;"><i></i></div>
<div class="t " style="right:797px;top:460px;font-size:13px;line-height:15px;color:#a00000;font-weight:bold;">530.00</div>
<div class="t " style="right:732px;top:460px;font-size:13px;line-height:15px;color:#1a3a9e;text-decoration:underline;">-18.87</div>
<div class="t " style="right:673px;top:460px;font-size:13px;line-height:15px;color:#000;">-18.87</div>
<div class="t " style="left:611px;top:460px;font-size:13px;line-height:15px;color:#000;">0001</div>
<div class="t " style="left:643px;top:460px;font-size:13px;line-height:15px;color:#1a3a9e;text-decoration:underline;">Demo D. D.</div>
<div class="t " style="left:771px;top:460px;font-size:13px;line-height:15px;color:#000;">ПБ</div>
<div class="t " style="left:810px;top:460px;font-size:13px;line-height:15px;color:#000;">Міст Експр…</div>
<svg class="r" style="left:904px;top:455px" width="22" height="20" viewBox="0 0 22 20"><defs><linearGradient id="tb" x1="0" y1="0" x2="0" y2="1"><stop offset="0" stop-color="#ffffff"/><stop offset="1" stop-color="#c8ecc8"/></linearGradient><linearGradient id="tc" x1="0" y1="0" x2="0" y2="1"><stop offset="0" stop-color="#5cc85c"/><stop offset="1" stop-color="#2a9a2a"/></linearGradient></defs><rect x="3.5" y="4.5" width="9" height="9" rx="1" fill="url(#tb)" stroke="#40b040"/><g stroke="#9ddc9d" stroke-width="1"><line x1="5" y1="6.5" x2="11" y2="6.5"/><line x1="5" y1="8.5" x2="11" y2="8.5"/><line x1="5" y1="10.5" x2="11" y2="10.5"/></g><path d="M12.5 5.5 H15.8 L18.6 8.3 V14.5 H12.5 Z" fill="url(#tc)" stroke="#1f7a1f"/><path d="M13.3 6.3 H15.5 L17.8 8.6 V9.4 H13.3 Z" fill="#fff"/><circle cx="7" cy="15" r="1.9" fill="#72de72" stroke="#145c14" stroke-width="1.2"/><circle cx="15" cy="15" r="1.9" fill="#72de72" stroke="#145c14" stroke-width="1.2"/><rect x="17.6" y="12.6" width="1.6" height="1.9" fill="#0a3a0a"/></svg>
<svg class="r" style="left:930px;top:455px" width="22" height="20" viewBox="0 0 22 20"><g fill="#d6d6d6"><path d="M16 5.4 C11.5 4.8 8 8.8 7.3 14.4" fill="none" stroke="#d6d6d6" stroke-width="3.8" stroke-linecap="round"/><ellipse cx="16.6" cy="5.7" rx="3" ry="2.3" transform="rotate(20 16.6 5.7)"/><ellipse cx="7.4" cy="14.6" rx="2.3" ry="3" transform="rotate(20 7.4 14.6)"/></g></svg>
<svg class="r" style="left:957px;top:454px" width="22" height="21" viewBox="0 0 22 21"><defs><linearGradient id="af" x1="0" y1="0" x2="0" y2="1"><stop offset="0" stop-color="#ffffff"/><stop offset="1" stop-color="#e2e2e2"/></linearGradient></defs><ellipse cx="6" cy="6" rx="2.8" ry="2.7" fill="#b4b4b4" stroke="#8c8c8c" stroke-width="0.7"/><ellipse cx="16" cy="6" rx="2.8" ry="2.7" fill="#b4b4b4" stroke="#8c8c8c" stroke-width="0.7"/><rect x="9.8" y="3" width="1.6" height="1.5" fill="#999"/><line x1="7" y1="15.5" x2="5" y2="18" stroke="#8a8a8a" stroke-width="1.3"/><line x1="14" y1="15.5" x2="16" y2="18" stroke="#8a8a8a" stroke-width="1.3"/><circle cx="10.5" cy="11.4" r="6.3" fill="url(#af)" stroke="#7a7a7a" stroke-width="1.1"/><path d="M10.4 6.4 V11.5 H15.5" fill="none" stroke="#2a2a2a" stroke-width="1.2"/><circle cx="10.4" cy="11.5" r="1" fill="#222"/></svg>
<svg class="r" style="left:984px;top:455px" width="20" height="20" viewBox="0 0 20 20"><rect x="3.3" y="3.1" width="3.6" height="13.4" fill="#b0b0b0"/><rect x="3.3" y="3.1" width="1.1" height="13.4" fill="#333"/><rect x="5.8" y="3.1" width="1.1" height="13.4" fill="#333"/><rect x="3.3" y="3.1" width="3.6" height="1.2" fill="#2e2e2e"/><path d="M2.2 6.2 L4 5.4 L4.2 7.4 L2.4 7.6 Z" fill="#111"/><path d="M17.7 9.6 C17.7 5.6 15.6 3.8 13.2 3.8 C10.3 3.8 9 6.4 9 10 C9 13.4 10.3 15.8 13.2 15.8 H17.7" fill="none" stroke="#262626" stroke-width="1.45"/><path d="M15.4 9.6 C15.4 7.6 14.5 6.6 13.2 6.6 C11.9 6.6 11.5 8.2 11.5 9.9 C11.5 11.7 12.2 13.1 13.6 13.1 H17.7" fill="none" stroke="#262626" stroke-width="1.45"/></svg>
<svg class="r" style="left:1019px;top:456px" width="18" height="18" viewBox="0 0 18 18"><ellipse cx="8.5" cy="15.6" rx="6.5" ry="0.9" fill="#9ab08a" opacity="0.5"/><circle cx="8.3" cy="8.4" r="7.4" fill="#7b7b7b"/><rect x="7.5" y="3.6" width="1.6" height="1.8" fill="#fff"/><rect x="7.5" y="6.6" width="1.6" height="6" fill="#fff"/></svg>
<div class="t " style="left:1045px;top:460px;font-size:13px;line-height:15px;color:#000;">DDD</div>
<div class="r" style="left:20px;top:479px;width:1060px;height:24px;background:#e0fbcc;"></div>
<div class="r" style="left:20px;top:502px;width:1060px;height:1px;background:#e2e2e2;"></div>
<div class="r" style="left:50px;top:479px;width:1px;height:23px;background:#e2e2e2;"></div>
<div class="r" style="left:119px;top:479px;width:1px;height:23px;background:#e2e2e2;"></div>
<div class="r" style="left:190px;top:479px;width:1px;height:23px;background:#e2e2e2;"></div>
<div class="r" style="left:261px;top:479px;width:1px;height:23px;background:#e2e2e2;"></div>
<div class="r" style="left:392px;top:479px;width:1px;height:23px;background:#e2e2e2;"></div>
<div class="r" style="left:455px;top:479px;width:1px;height:23px;background:#e2e2e2;"></div>
<div class="r" style="left:520px;top:479px;width:1px;height:23px;background:#e2e2e2;"></div>
<div class="r" style="left:580px;top:479px;width:1px;height:23px;background:#e2e2e2;"></div>
<div class="r" style="left:606px;top:479px;width:1px;height:23px;background:#e2e2e2;"></div>
<div class="r" style="left:766px;top:479px;width:1px;height:23px;background:#e2e2e2;"></div>
<div class="r" style="left:805px;top:479px;width:1px;height:23px;background:#e2e2e2;"></div>
<div class="r" style="left:902px;top:479px;width:1px;height:23px;background:#e2e2e2;"></div>
<div class="r" style="left:928px;top:479px;width:1px;height:23px;background:#e2e2e2;"></div>
<div class="r" style="left:955px;top:479px;width:1px;height:23px;background:#e2e2e2;"></div>
<div class="r" style="left:981px;top:479px;width:1px;height:23px;background:#e2e2e2;"></div>
<div class="r" style="left:1014px;top:479px;width:1px;height:23px;background:#e2e2e2;"></div>
<div class="r" style="left:1040px;top:479px;width:1px;height:23px;background:#e2e2e2;"></div>
<div class="r" style="left:20px;top:479px;width:1px;height:24px;background:#e2e2e2;"></div>
<div class="r" style="left:1079px;top:479px;width:1px;height:24px;background:#e2e2e2;"></div>
<div class="cb" style="left:29px;top:484px;"></div>
<div class="t " style="left:55px;top:484px;font-size:13px;line-height:15px;color:#1a3a9e;font-weight:bold;text-decoration:underline;">2</div>
<div class="r" style="left:102px;top:488px;width:0;height:0;border-left:5.0px solid transparent;border-right:5.0px solid transparent;border-top:6px solid #1fae1f;"></div>
<div class="t " style="left:124px;top:484px;font-size:13px;line-height:15px;color:#444;">18.02.12</div>
<div class="t " style="left:195px;top:484px;font-size:13px;line-height:15px;color:#444;">25.07.12</div>
<div class="t " style="left:266px;top:484px;font-size:13px;line-height:15px;color:#000;">новый</div>
<div class="sb" style="left:374px;top:482px;width:15px;height:16px;"><i></i></div>
<div class="t " style="right:797px;top:484px;font-size:13px;line-height:15px;color:#a00000;font-weight:bold;">530.00</div>
<div class="t " style="right:732px;top:484px;font-size:13px;line-height:15px;color:#1a3a9e;text-decoration:underline;">-18.87</div>
<div class="t " style="right:673px;top:484px;font-size:13px;line-height:15px;color:#000;">-18.87</div>
<div class="t " style="left:611px;top:484px;font-size:13px;line-height:15px;color:#000;">0001</div>
<div class="t " style="left:643px;top:484px;font-size:13px;line-height:15px;color:#1a3a9e;text-decoration:underline;">Demo D. D.</div>
<div class="t " style="left:771px;top:484px;font-size:13px;line-height:15px;color:#000;">ПБ</div>
<div class="t " style="left:810px;top:484px;font-size:13px;line-height:15px;color:#000;">ЕвроЭкспре…</div>
<svg class="r" style="left:904px;top:479px" width="22" height="20" viewBox="0 0 22 20"><defs><linearGradient id="tb" x1="0" y1="0" x2="0" y2="1"><stop offset="0" stop-color="#ffffff"/><stop offset="1" stop-color="#c8ecc8"/></linearGradient><linearGradient id="tc" x1="0" y1="0" x2="0" y2="1"><stop offset="0" stop-color="#5cc85c"/><stop offset="1" stop-color="#2a9a2a"/></linearGradient></defs><rect x="3.5" y="4.5" width="9" height="9" rx="1" fill="url(#tb)" stroke="#40b040"/><g stroke="#9ddc9d" stroke-width="1"><line x1="5" y1="6.5" x2="11" y2="6.5"/><line x1="5" y1="8.5" x2="11" y2="8.5"/><line x1="5" y1="10.5" x2="11" y2="10.5"/></g><path d="M12.5 5.5 H15.8 L18.6 8.3 V14.5 H12.5 Z" fill="url(#tc)" stroke="#1f7a1f"/><path d="M13.3 6.3 H15.5 L17.8 8.6 V9.4 H13.3 Z" fill="#fff"/><circle cx="7" cy="15" r="1.9" fill="#72de72" stroke="#145c14" stroke-width="1.2"/><circle cx="15" cy="15" r="1.9" fill="#72de72" stroke="#145c14" stroke-width="1.2"/><rect x="17.6" y="12.6" width="1.6" height="1.9" fill="#0a3a0a"/></svg>
<svg class="r" style="left:930px;top:479px" width="22" height="20" viewBox="0 0 22 20"><g fill="#d6d6d6"><path d="M16 5.4 C11.5 4.8 8 8.8 7.3 14.4" fill="none" stroke="#d6d6d6" stroke-width="3.8" stroke-linecap="round"/><ellipse cx="16.6" cy="5.7" rx="3" ry="2.3" transform="rotate(20 16.6 5.7)"/><ellipse cx="7.4" cy="14.6" rx="2.3" ry="3" transform="rotate(20 7.4 14.6)"/></g></svg>
<svg class="r" style="left:957px;top:478px" width="22" height="21" viewBox="0 0 22 21"><defs><linearGradient id="af" x1="0" y1="0" x2="0" y2="1"><stop offset="0" stop-color="#ffffff"/><stop offset="1" stop-color="#e2e2e2"/></linearGradient></defs><ellipse cx="6" cy="6" rx="2.8" ry="2.7" fill="#b4b4b4" stroke="#8c8c8c" stroke-width="0.7"/><ellipse cx="16" cy="6" rx="2.8" ry="2.7" fill="#b4b4b4" stroke="#8c8c8c" stroke-width="0.7"/><rect x="9.8" y="3" width="1.6" height="1.5" fill="#999"/><line x1="7" y1="15.5" x2="5" y2="18" stroke="#8a8a8a" stroke-width="1.3"/><line x1="14" y1="15.5" x2="16" y2="18" stroke="#8a8a8a" stroke-width="1.3"/><circle cx="10.5" cy="11.4" r="6.3" fill="url(#af)" stroke="#7a7a7a" stroke-width="1.1"/><path d="M10.4 6.4 V11.5 H15.5" fill="none" stroke="#2a2a2a" stroke-width="1.2"/><circle cx="10.4" cy="11.5" r="1" fill="#222"/></svg>
<svg class="r" style="left:984px;top:479px" width="20" height="20" viewBox="0 0 20 20"><rect x="3.3" y="3.1" width="3.6" height="13.4" fill="#b0b0b0"/><rect x="3.3" y="3.1" width="1.1" height="13.4" fill="#333"/><rect x="5.8" y="3.1" width="1.1" height="13.4" fill="#333"/><rect x="3.3" y="3.1" width="3.6" height="1.2" fill="#2e2e2e"/><path d="M2.2 6.2 L4 5.4 L4.2 7.4 L2.4 7.6 Z" fill="#111"/><path d="M17.7 9.6 C17.7 5.6 15.6 3.8 13.2 3.8 C10.3 3.8 9 6.4 9 10 C9 13.4 10.3 15.8 13.2 15.8 H17.7" fill="none" stroke="#262626" stroke-width="1.45"/><path d="M15.4 9.6 C15.4 7.6 14.5 6.6 13.2 6.6 C11.9 6.6 11.5 8.2 11.5 9.9 C11.5 11.7 12.2 13.1 13.6 13.1 H17.7" fill="none" stroke="#262626" stroke-width="1.45"/></svg>
<svg class="r" style="left:1019px;top:480px" width="18" height="18" viewBox="0 0 18 18"><ellipse cx="8.5" cy="15.6" rx="6.5" ry="0.9" fill="#9ab08a" opacity="0.5"/><circle cx="8.3" cy="8.4" r="7.4" fill="#7b7b7b"/><rect x="7.5" y="3.6" width="1.6" height="1.8" fill="#fff"/><rect x="7.5" y="6.6" width="1.6" height="6" fill="#fff"/></svg>
<div class="t " style="left:1045px;top:484px;font-size:13px;line-height:15px;color:#000;">DDD</div>
<div class="r" style="left:20px;top:503px;width:1060px;height:24px;background:#e0fbcc;"></div>
<div class="r" style="left:20px;top:526px;width:1060px;height:1px;background:#e2e2e2;"></div>
<div class="r" style="left:50px;top:503px;width:1px;height:23px;background:#e2e2e2;"></div>
<div class="r" style="left:119px;top:503px;width:1px;height:23px;background:#e2e2e2;"></div>
<div class="r" style="left:190px;top:503px;width:1px;height:23px;background:#e2e2e2;"></div>
<div class="r" style="left:261px;top:503px;width:1px;height:23px;background:#e2e2e2;"></div>
<div class="r" style="left:392px;top:503px;width:1px;height:23px;background:#e2e2e2;"></div>
<div class="r" style="left:455px;top:503px;width:1px;height:23px;background:#e2e2e2;"></div>
<div class="r" style="left:520px;top:503px;width:1px;height:23px;background:#e2e2e2;"></div>
<div class="r" style="left:580px;top:503px;width:1px;height:23px;background:#e2e2e2;"></div>
<div class="r" style="left:606px;top:503px;width:1px;height:23px;background:#e2e2e2;"></div>
<div class="r" style="left:766px;top:503px;width:1px;height:23px;background:#e2e2e2;"></div>
<div class="r" style="left:805px;top:503px;width:1px;height:23px;background:#e2e2e2;"></div>
<div class="r" style="left:902px;top:503px;width:1px;height:23px;background:#e2e2e2;"></div>
<div class="r" style="left:928px;top:503px;width:1px;height:23px;background:#e2e2e2;"></div>
<div class="r" style="left:955px;top:503px;width:1px;height:23px;background:#e2e2e2;"></div>
<div class="r" style="left:981px;top:503px;width:1px;height:23px;background:#e2e2e2;"></div>
<div class="r" style="left:1014px;top:503px;width:1px;height:23px;background:#e2e2e2;"></div>
<div class="r" style="left:1040px;top:503px;width:1px;height:23px;background:#e2e2e2;"></div>
<div class="r" style="left:20px;top:503px;width:1px;height:24px;background:#e2e2e2;"></div>
<div class="r" style="left:1079px;top:503px;width:1px;height:24px;background:#e2e2e2;"></div>
<div class="cb" style="left:29px;top:508px;"></div>
<div class="t " style="left:55px;top:508px;font-size:13px;line-height:15px;color:#1a3a9e;font-weight:bold;text-decoration:underline;">1</div>
<div class="r" style="left:102px;top:512px;width:0;height:0;border-left:5.0px solid transparent;border-right:5.0px solid transparent;border-top:6px solid #1fae1f;"></div>
<div class="t " style="left:124px;top:508px;font-size:13px;line-height:15px;color:#444;">17.02.12</div>
<div class="t " style="left:195px;top:508px;font-size:13px;line-height:15px;color:#444;">25.07.12</div>
<div class="t " style="left:266px;top:508px;font-size:13px;line-height:15px;color:#000;">новый</div>
<div class="sb" style="left:374px;top:506px;width:15px;height:16px;"><i></i></div>
<div class="t " style="right:797px;top:508px;font-size:13px;line-height:15px;color:#a00000;font-weight:bold;">530.00</div>
<div class="t " style="right:732px;top:508px;font-size:13px;line-height:15px;color:#1a3a9e;text-decoration:underline;">-18.87</div>
<div class="t " style="right:673px;top:508px;font-size:13px;line-height:15px;color:#000;">-18.87</div>
<div class="t " style="left:611px;top:508px;font-size:13px;line-height:15px;color:#000;">0001</div>
<div class="t " style="left:643px;top:508px;font-size:13px;line-height:15px;color:#1a3a9e;text-decoration:underline;">Demo D. D.</div>
<div class="t " style="left:771px;top:508px;font-size:13px;line-height:15px;color:#000;">ПБ</div>
<div class="t " style="left:810px;top:508px;font-size:13px;line-height:15px;color:#000;">CAT</div>
<svg class="r" style="left:904px;top:503px" width="22" height="20" viewBox="0 0 22 20"><defs><linearGradient id="tb" x1="0" y1="0" x2="0" y2="1"><stop offset="0" stop-color="#ffffff"/><stop offset="1" stop-color="#c8ecc8"/></linearGradient><linearGradient id="tc" x1="0" y1="0" x2="0" y2="1"><stop offset="0" stop-color="#5cc85c"/><stop offset="1" stop-color="#2a9a2a"/></linearGradient></defs><rect x="3.5" y="4.5" width="9" height="9" rx="1" fill="url(#tb)" stroke="#40b040"/><g stroke="#9ddc9d" stroke-width="1"><line x1="5" y1="6.5" x2="11" y2="6.5"/><line x1="5" y1="8.5" x2="11" y2="8.5"/><line x1="5" y1="10.5" x2="11" y2="10.5"/></g><path d="M12.5 5.5 H15.8 L18.6 8.3 V14.5 H12.5 Z" fill="url(#tc)" stroke="#1f7a1f"/><path d="M13.3 6.3 H15.5 L17.8 8.6 V9.4 H13.3 Z" fill="#fff"/><circle cx="7" cy="15" r="1.9" fill="#72de72" stroke="#145c14" stroke-width="1.2"/><circle cx="15" cy="15" r="1.9" fill="#72de72" stroke="#145c14" stroke-width="1.2"/><rect x="17.6" y="12.6" width="1.6" height="1.9" fill="#0a3a0a"/></svg>
<svg class="r" style="left:930px;top:503px" width="22" height="20" viewBox="0 0 22 20"><g fill="#d6d6d6"><path d="M16 5.4 C11.5 4.8 8 8.8 7.3 14.4" fill="none" stroke="#d6d6d6" stroke-width="3.8" stroke-linecap="round"/><ellipse cx="16.6" cy="5.7" rx="3" ry="2.3" transform="rotate(20 16.6 5.7)"/><ellipse cx="7.4" cy="14.6" rx="2.3" ry="3" transform="rotate(20 7.4 14.6)"/></g></svg>
<svg class="r" style="left:957px;top:502px" width="22" height="21" viewBox="0 0 22 21"><defs><linearGradient id="af" x1="0" y1="0" x2="0" y2="1"><stop offset="0" stop-color="#ffffff"/><stop offset="1" stop-color="#e2e2e2"/></linearGradient></defs><ellipse cx="6" cy="6" rx="2.8" ry="2.7" fill="#b4b4b4" stroke="#8c8c8c" stroke-width="0.7"/><ellipse cx="16" cy="6" rx="2.8" ry="2.7" fill="#b4b4b4" stroke="#8c8c8c" stroke-width="0.7"/><rect x="9.8" y="3" width="1.6" height="1.5" fill="#999"/><line x1="7" y1="15.5" x2="5" y2="18" stroke="#8a8a8a" stroke-width="1.3"/><line x1="14" y1="15.5" x2="16" y2="18" stroke="#8a8a8a" stroke-width="1.3"/><circle cx="10.5" cy="11.4" r="6.3" fill="url(#af)" stroke="#7a7a7a" stroke-width="1.1"/><path d="M10.4 6.4 V11.5 H15.5" fill="none" stroke="#2a2a2a" stroke-width="1.2"/><circle cx="10.4" cy="11.5" r="1" fill="#222"/></svg>
<svg class="r" style="left:984px;top:503px" width="20" height="20" viewBox="0 0 20 20"><rect x="3.3" y="3.1" width="3.6" height="13.4" fill="#b0b0b0"/><rect x="3.3" y="3.1" width="1.1" height="13.4" fill="#333"/><rect x="5.8" y="3.1" width="1.1" height="13.4" fill="#333"/><rect x="3.3" y="3.1" width="3.6" height="1.2" fill="#2e2e2e"/><path d="M2.2 6.2 L4 5.4 L4.2 7.4 L2.4 7.6 Z" fill="#111"/><path d="M17.7 9.6 C17.7 5.6 15.6 3.8 13.2 3.8 C10.3 3.8 9 6.4 9 10 C9 13.4 10.3 15.8 13.2 15.8 H17.7" fill="none" stroke="#262626" stroke-width="1.45"/><path d="M15.4 9.6 C15.4 7.6 14.5 6.6 13.2 6.6 C11.9 6.6 11.5 8.2 11.5 9.9 C11.5 11.7 12.2 13.1 13.6 13.1 H17.7" fill="none" stroke="#262626" stroke-width="1.45"/></svg>
<svg class="r" style="left:1019px;top:504px" width="18" height="18" viewBox="0 0 18 18"><ellipse cx="8.5" cy="15.6" rx="6.5" ry="0.9" fill="#9ab08a" opacity="0.5"/><circle cx="8.3" cy="8.4" r="7.4" fill="#7b7b7b"/><rect x="7.5" y="3.6" width="1.6" height="1.8" fill="#fff"/><rect x="7.5" y="6.6" width="1.6" height="6" fill="#fff"/></svg>
<div class="t " style="left:1045px;top:508px;font-size:13px;line-height:15px;color:#000;">DDD</div>
<div class="r" style="left:51px;top:280px;width:989px;height:174px;background:#fff;border:1px solid #9a9a9a;box-sizing:border-box;box-shadow:0 0 3px rgba(0,0,0,.3), 1px 1px 2px rgba(0,0,0,.25);"></div>
<div class="r" style="left:58px;top:287px;width:975px;height:41px;background:#d6dde6;"></div>
<div class="r" style="left:58px;top:328px;width:975px;height:31px;background:#fff;"></div>
<div class="r" style="left:58px;top:358px;width:975px;height:1px;background:#d3dce6;"></div>
<div class="r" style="left:58px;top:328px;width:1px;height:31px;background:#d3dce6;"></div>
<div class="r" style="left:71px;top:328px;width:1px;height:31px;background:#d3dce6;"></div>
<div class="r" style="left:96px;top:328px;width:1px;height:31px;background:#d3dce6;"></div>
<div class="r" style="left:320px;top:328px;width:1px;height:31px;background:#d3dce6;"></div>
<div class="r" style="left:444px;top:328px;width:1px;height:31px;background:#d3dce6;"></div>
<div class="r" style="left:549px;top:328px;width:1px;height:31px;background:#d3dce6;"></div>
<div class="r" style="left:570px;top:328px;width:1px;height:31px;background:#d3dce6;"></div>
<div class="r" style="left:636px;top:328px;width:1px;height:31px;background:#d3dce6;"></div>
<div class="r" style="left:701px;top:328px;width:1px;height:31px;background:#d3dce6;"></div>
<div class="r" style="left:760px;top:328px;width:1px;height:31px;background:#d3dce6;"></div>
<div class="r" style="left:826px;top:328px;width:1px;height:31px;background:#d3dce6;"></div>
<div class="r" style="left:892px;top:328px;width:1px;height:31px;background:#d3dce6;"></div>
<div class="r" style="left:957px;top:328px;width:1px;height:31px;background:#d3dce6;"></div>
<div class="r" style="left:982px;top:328px;width:1px;height:31px;background:#d3dce6;"></div>
<div class="r" style="left:1007px;top:328px;width:1px;height:31px;background:#d3dce6;"></div>
<div class="r" style="left:1032px;top:328px;width:1px;height:31px;background:#d3dce6;"></div>
<div class="r" style="left:58px;top:359px;width:975px;height:31px;background:#f5f9fd;"></div>
<div class="r" style="left:58px;top:389px;width:975px;height:1px;background:#d3dce6;"></div>
<div class="r" style="left:58px;top:359px;width:1px;height:31px;background:#d3dce6;"></div>
<div class="r" style="left:71px;top:359px;width:1px;height:31px;background:#d3dce6;"></div>
<div class="r" style="left:96px;top:359px;width:1px;height:31px;background:#d3dce6;"></div>
<div class="r" style="left:320px;top:359px;width:1px;height:31px;background:#d3dce6;"></div>
<div class="r" style="left:444px;top:359px;width:1px;height:31px;background:#d3dce6;"></div>
<div class="r" style="left:549px;top:359px;width:1px;height:31px;background:#d3dce6;"></div>
<div class="r" style="left:570px;top:359px;width:1px;height:31px;background:#d3dce6;"></div>
<div class="r" style="left:636px;top:359px;width:1px;height:31px;background:#d3dce6;"></div>
<div class="r" style="left:701px;top:359px;width:1px;height:31px;background:#d3dce6;"></div>
<div class="r" style="left:760px;top:359px;width:1px;height:31px;background:#d3dce6;"></div>
<div class="r" style="left:826px;top:359px;width:1px;height:31px;background:#d3dce6;"></div>
<div class="r" style="left:892px;top:359px;width:1px;height:31px;background:#d3dce6;"></div>
<div class="r" style="left:957px;top:359px;width:1px;height:31px;background:#d3dce6;"></div>
<div class="r" style="left:982px;top:359px;width:1px;height:31px;background:#d3dce6;"></div>
<div class="r" style="left:1007px;top:359px;width:1px;height:31px;background:#d3dce6;"></div>
<div class="r" style="left:1032px;top:359px;width:1px;height:31px;background:#d3dce6;"></div>
<div class="t " style="left:61px;top:301px;font-size:13px;line-height:15px;color:#000;">#</div>
<div class="t " style="left:99px;top:301px;font-size:13px;line-height:15px;color:#000;">Название</div>
<div class="t " style="left:323px;top:301px;font-size:13px;line-height:15px;color:#000;">Статус</div>
<div class="t " style="left:447px;top:301px;font-size:13px;line-height:15px;color:#000;">Склад</div>
<div class="t " style="left:573px;top:291px;font-size:13px;line-height:15px;color:#000;">Цена</div>
<div class="t " style="left:573px;top:308px;font-size:9px;line-height:10px;color:#000;">закуп.</div>
<div class="t " style="left:639px;top:301px;font-size:13px;line-height:15px;color:#000;">Цена</div>
<div class="t " style="left:673px;top:299px;font-size:10px;line-height:11px;color:#000;">розд.</div>
<div class="t " style="left:704px;top:301px;font-size:13px;line-height:15px;color:#000;">Скидка</div>
<div class="t " style="left:763px;top:301px;font-size:13px;line-height:15px;color:#000;">Цена</div>
<div class="t " style="left:829px;top:301px;font-size:13px;line-height:15px;color:#000;">К-во</div>
<div class="t " style="left:895px;top:301px;font-size:13px;line-height:15px;color:#000;">Сумма</div>
<div class="t " style="left:61px;top:336px;font-size:13px;line-height:15px;color:#000;">1</div>
<div class="cb" style="left:78px;top:337px;"></div>
<div class="t " style="left:99px;top:330px;font-size:13px;line-height:15px;color:#000;">OPTIMAL <b>100002</b></div>
<div class="t " style="left:99px;top:344px;font-size:11px;line-height:12px;color:#555;">Комплект подшипника ступицы колеса</div>
<div class="r" style="left:323px;top:332px;width:119px;height:22px;background:#f8f7dc;border:1px solid #c5cbd3;box-sizing:border-box;"></div>
<div class="t " style="left:328px;top:336px;font-size:13px;line-height:15px;color:#000;">не обработан</div>
<div class="sb" style="left:423px;top:334px;width:15px;height:16px;"><i></i></div>
<div class="r" style="left:447px;top:332px;width:100px;height:22px;background:#fff;border:1px solid #c5cbd3;box-sizing:border-box;"></div>
<div class="t " style="left:452px;top:336px;font-size:13px;line-height:15px;color:#000;">---------</div>
<div class="sb" style="left:528px;top:334px;width:15px;height:16px;"><i></i></div>
<div class="r" style="left:573px;top:332px;width:61px;height:22px;background:#fff;border:1px solid #c5cbd3;box-sizing:border-box;"></div>
<div class="t " style="right:618px;top:336px;font-size:13px;line-height:15px;color:#000;">0.00</div>
<div class="t " style="right:550px;top:336px;font-size:13px;line-height:15px;color:#3a7a0a;">0.00</div>
<div class="t " style="right:491px;top:336px;font-size:13px;line-height:15px;color:#1a3a9e;text-decoration:underline;">0.0%</div>
<div class="r" style="left:763px;top:332px;width:61px;height:22px;background:#e2f9d2;border:1px solid #c5cbd3;box-sizing:border-box;"></div>
<div class="t " style="right:428px;top:336px;font-size:13px;line-height:15px;color:#000;font-weight:bold;">0.00</div>
<div class="r" style="left:829px;top:332px;width:61px;height:22px;background:#fff;border:1px solid #c5cbd3;box-sizing:border-box;"></div>
<div class="t " style="right:362px;top:336px;font-size:13px;line-height:15px;color:#000;">1</div>
<div class="t " style="right:294px;top:336px;font-size:13px;line-height:15px;color:#000;">0.00</div>
<svg class="r" style="left:958px;top:330px" width="22" height="22" viewBox="0 0 22 22"><defs><linearGradient id="gb" x1="0" y1="0" x2="0" y2="1"><stop offset="0" stop-color="#eeeeee"/><stop offset="1" stop-color="#c4c4c4"/></linearGradient></defs><path d="M8.6 15 L8.3 19.6 L12.5 15.6 Z" fill="#c8c8c8" stroke="#9a9a9a" stroke-width="0.8" stroke-linejoin="round"/><ellipse cx="12" cy="10.6" rx="7.4" ry="5.3" fill="url(#gb)" stroke="#a4a4a4" stroke-width="0.9"/><path d="M8.7 15.2 L8.6 18.6 L12.2 15.4 Z" fill="#c6c6c6"/></svg>
<svg class="r" style="left:984px;top:331px" width="22" height="21" viewBox="0 0 22 21"><defs><linearGradient id="af" x1="0" y1="0" x2="0" y2="1"><stop offset="0" stop-color="#ffffff"/><stop offset="1" stop-color="#e2e2e2"/></linearGradient></defs><ellipse cx="6" cy="6" rx="2.8" ry="2.7" fill="#b4b4b4" stroke="#8c8c8c" stroke-width="0.7"/><ellipse cx="16" cy="6" rx="2.8" ry="2.7" fill="#b4b4b4" stroke="#8c8c8c" stroke-width="0.7"/><rect x="9.8" y="3" width="1.6" height="1.5" fill="#999"/><line x1="7" y1="15.5" x2="5" y2="18" stroke="#8a8a8a" stroke-width="1.3"/><line x1="14" y1="15.5" x2="16" y2="18" stroke="#8a8a8a" stroke-width="1.3"/><circle cx="10.5" cy="11.4" r="6.3" fill="url(#af)" stroke="#7a7a7a" stroke-width="1.1"/><path d="M10.4 6.4 V11.5 H15.5" fill="none" stroke="#2a2a2a" stroke-width="1.2"/><circle cx="10.4" cy="11.5" r="1" fill="#222"/></svg>
<svg class="r" style="left:1010px;top:332px" width="20" height="20" viewBox="0 0 20 20"><rect x="3.3" y="3.1" width="3.6" height="13.4" fill="#b0b0b0"/><rect x="3.3" y="3.1" width="1.1" height="13.4" fill="#333"/><rect x="5.8" y="3.1" width="1.1" height="13.4" fill="#333"/><rect x="3.3" y="3.1" width="3.6" height="1.2" fill="#2e2e2e"/><path d="M2.2 6.2 L4 5.4 L4.2 7.4 L2.4 7.6 Z" fill="#111"/><path d="M17.7 9.6 C17.7 5.6 15.6 3.8 13.2 3.8 C10.3 3.8 9 6.4 9 10 C9 13.4 10.3 15.8 13.2 15.8 H17.7" fill="none" stroke="#262626" stroke-width="1.45"/><path d="M15.4 9.6 C15.4 7.6 14.5 6.6 13.2 6.6 C11.9 6.6 11.5 8.2 11.5 9.9 C11.5 11.7 12.2 13.1 13.6 13.1 H17.7" fill="none" stroke="#262626" stroke-width="1.45"/></svg>
<div class="t " style="left:61px;top:367px;font-size:13px;line-height:15px;color:#000;">2</div>
<div class="cb" style="left:78px;top:368px;"></div>
<div class="t " style="left:99px;top:361px;font-size:13px;line-height:15px;color:#000;">CX <b>CX010</b></div>
<div class="t " style="left:99px;top:375px;font-size:11px;line-height:12px;color:#555;">Комплект подшипника ступицы колеса</div>
<div class="r" style="left:323px;top:363px;width:119px;height:22px;background:#f8f7dc;border:1px solid #c5cbd3;box-sizing:border-box;"></div>
<div class="t " style="left:328px;top:367px;font-size:13px;line-height:15px;color:#000;">не обработан</div>
<div class="sb" style="left:423px;top:365px;width:15px;height:16px;"><i></i></div>
<div class="r" style="left:447px;top:363px;width:100px;height:22px;background:#fff;border:1px solid #c5cbd3;box-sizing:border-box;"></div>
<div class="t " style="left:452px;top:367px;font-size:13px;line-height:15px;color:#000;">001</div>
<div class="sb" style="left:528px;top:365px;width:15px;height:16px;"><i></i></div>
<svg class="r" style="left:548px;top:360px" width="24" height="22" viewBox="0 0 24 22"><defs><linearGradient id="bi" x1="0" y1="0" x2="0" y2="1"><stop offset="0" stop-color="#7aa2fb"/><stop offset="1" stop-color="#2f5cf0"/></linearGradient></defs><ellipse cx="12.4" cy="19.3" rx="6" ry="0.7" fill="#888" opacity="0.35"/><circle cx="12.35" cy="12.35" r="7.6" fill="url(#bi)"/><rect x="11" y="8.1" width="2.8" height="1.7" fill="#fff"/><rect x="11.2" y="11.2" width="2.4" height="5.5" fill="#fff"/></svg>
<div class="r" style="left:573px;top:363px;width:61px;height:22px;background:#fff;border:1px solid #c5cbd3;box-sizing:border-box;"></div>
<div class="t " style="right:618px;top:367px;font-size:13px;line-height:15px;color:#000;">30.00</div>
<div class="t " style="right:550px;top:367px;font-size:13px;line-height:15px;color:#3a7a0a;">30.00</div>
<div class="t " style="right:491px;top:367px;font-size:13px;line-height:15px;color:#1a3a9e;text-decoration:underline;">0.0%</div>
<div class="r" style="left:763px;top:363px;width:61px;height:22px;background:#e2f9d2;border:1px solid #c5cbd3;box-sizing:border-box;"></div>
<div class="t " style="right:428px;top:367px;font-size:13px;line-height:15px;color:#000;font-weight:bold;">30.00</div>
<div class="r" style="left:829px;top:363px;width:61px;height:22px;background:#fff;border:1px solid #c5cbd3;box-sizing:border-box;"></div>
<div class="t " style="right:362px;top:367px;font-size:13px;line-height:15px;color:#000;">1</div>
<div class="t " style="right:294px;top:367px;font-size:13px;line-height:15px;color:#000;">30.00</div>
<svg class="r" style="left:958px;top:361px" width="22" height="22" viewBox="0 0 22 22"><defs><linearGradient id="gb" x1="0" y1="0" x2="0" y2="1"><stop offset="0" stop-color="#eeeeee"/><stop offset="1" stop-color="#c4c4c4"/></linearGradient></defs><path d="M8.6 15 L8.3 19.6 L12.5 15.6 Z" fill="#c8c8c8" stroke="#9a9a9a" stroke-width="0.8" stroke-linejoin="round"/><ellipse cx="12" cy="10.6" rx="7.4" ry="5.3" fill="url(#gb)" stroke="#a4a4a4" stroke-width="0.9"/><path d="M8.7 15.2 L8.6 18.6 L12.2 15.4 Z" fill="#c6c6c6"/></svg>
<svg class="r" style="left:984px;top:362px" width="22" height="21" viewBox="0 0 22 21"><defs><linearGradient id="af" x1="0" y1="0" x2="0" y2="1"><stop offset="0" stop-color="#ffffff"/><stop offset="1" stop-color="#e2e2e2"/></linearGradient></defs><ellipse cx="6" cy="6" rx="2.8" ry="2.7" fill="#b4b4b4" stroke="#8c8c8c" stroke-width="0.7"/><ellipse cx="16" cy="6" rx="2.8" ry="2.7" fill="#b4b4b4" stroke="#8c8c8c" stroke-width="0.7"/><rect x="9.8" y="3" width="1.6" height="1.5" fill="#999"/><line x1="7" y1="15.5" x2="5" y2="18" stroke="#8a8a8a" stroke-width="1.3"/><line x1="14" y1="15.5" x2="16" y2="18" stroke="#8a8a8a" stroke-width="1.3"/><circle cx="10.5" cy="11.4" r="6.3" fill="url(#af)" stroke="#7a7a7a" stroke-width="1.1"/><path d="M10.4 6.4 V11.5 H15.5" fill="none" stroke="#2a2a2a" stroke-width="1.2"/><circle cx="10.4" cy="11.5" r="1" fill="#222"/></svg>
<svg class="r" style="left:1010px;top:363px" width="20" height="20" viewBox="0 0 20 20"><rect x="3.3" y="3.1" width="3.6" height="13.4" fill="#b0b0b0"/><rect x="3.3" y="3.1" width="1.1" height="13.4" fill="#333"/><rect x="5.8" y="3.1" width="1.1" height="13.4" fill="#333"/><rect x="3.3" y="3.1" width="3.6" height="1.2" fill="#2e2e2e"/><path d="M2.2 6.2 L4 5.4 L4.2 7.4 L2.4 7.6 Z" fill="#111"/><path d="M17.7 9.6 C17.7 5.6 15.6 3.8 13.2 3.8 C10.3 3.8 9 6.4 9 10 C9 13.4 10.3 15.8 13.2 15.8 H17.7" fill="none" stroke="#262626" stroke-width="1.45"/><path d="M15.4 9.6 C15.4 7.6 14.5 6.6 13.2 6.6 C11.9 6.6 11.5 8.2 11.5 9.9 C11.5 11.7 12.2 13.1 13.6 13.1 H17.7" fill="none" stroke="#262626" stroke-width="1.45"/></svg>
<div class="btn" style="left:60px;top:407px;width:86px;height:23px;line-height:23px;font-size:11.5px;">Сохранить</div>
<div class="btn" style="left:154px;top:407px;width:114px;height:23px;line-height:23px;font-size:11.5px;">Пересчет цены</div>
<svg class="r" style="left:272px;top:406px" width="20" height="20" viewBox="0 0 20 20"><path d="M7.6 5.5 H11.4 V9.6 H15.3 V13.2 H11.4 V17.2 H7.6 V13.2 H3.6 V9.6 H7.6 Z" fill="#b6de6e" stroke="#84bb3c" stroke-width="1.1" stroke-linejoin="round"/><path d="M9.5 6.5 V16.2 M4.6 11.4 H14.3" stroke="#d8f0a8" stroke-width="0.8"/></svg>
<div class="t " style="left:292px;top:411px;font-size:13px;line-height:15px;color:#1a9a1a;text-decoration:underline;">Добавить</div>
<div class="r" style="left:372px;top:407px;width:181px;height:22px;background:#fff;border:1px solid #c5cbd3;box-sizing:border-box;"></div>
<div class="t " style="left:377px;top:411px;font-size:13px;line-height:15px;color:#000;">Новый заказ</div>
<div class="sb" style="left:534px;top:409px;width:15px;height:16px;"><i></i></div>
<div class="btn" style="left:559px;top:407px;width:100px;height:23px;line-height:23px;font-size:11.5px;">Переместить</div>
<div class="btn" style="left:667px;top:407px;width:92px;height:23px;line-height:23px;font-size:11.5px;">Копировать</div>
<div class="t " style="left:785px;top:411px;font-size:13px;line-height:15px;color:#000;font-weight:bold;">Всего: 30.00 грн. Прибыль: 0.00 грн.</div>
<svg class="r" style="left:22px;top:535px" width="70" height="22" viewBox="0 0 70 22"><defs><linearGradient id="pga" x1="0" y1="0" x2="0" y2="1"><stop offset="0" stop-color="#d8d8d8"/><stop offset="1" stop-color="#9a9a9a"/></linearGradient></defs><polygon points="11.6,5.4 5.2,10.8 11.6,16.4" fill="url(#pga)" stroke="#6a6a6a" stroke-width="0.9" stroke-linejoin="round"/><polygon points="57.4,5.4 63.8,10.8 57.4,16.4" fill="url(#pga)" stroke="#6a6a6a" stroke-width="0.9" stroke-linejoin="round"/></svg>
<div class="r" style="left:42px;top:535px;width:30px;height:22px;background:#b4d4fa;border:1px solid #bfc8d2;box-sizing:border-box;"></div>
<div class="t " style="left:46px;top:539px;font-size:13px;line-height:15px;color:#000;">1</div>
<div class="t " style="left:20px;top:589px;font-size:13px;line-height:15px;color:#000;font-weight:bold;">Изменить статус</div>
<div class="r" style="left:132px;top:585px;width:135px;height:22px;background:#fff;border:1px solid #c5cbd3;box-sizing:border-box;"></div>
<div class="t " style="left:137px;top:589px;font-size:13px;line-height:15px;color:#000;">новый</div>
<div class="sb" style="left:248px;top:587px;width:15px;height:16px;"><i></i></div>
<div class="cb" style="left:275px;top:589px;"></div>
<div class="t " style="left:295px;top:589px;font-size:13px;line-height:15px;color:#000;">принудительно</div>
<div class="btn" style="left:391px;top:585px;width:79px;height:23px;line-height:23px;font-size:11.5px;">Изменить</div>
<div class="t " style="left:20px;top:620px;font-size:13px;line-height:15px;color:#000;font-weight:bold;letter-spacing:0.1px;">Изменить менеджера</div>
<div class="r" style="left:166px;top:617px;width:138px;height:21px;background:#fff;border:1px solid #c5cbd3;box-sizing:border-box;"></div>
<div class="t " style="left:171px;top:620px;font-size:13px;line-height:15px;color:#000;">---------</div>
<div class="sb" style="left:285px;top:619px;width:15px;height:15px;"><i></i></div>
<div class="btn" style="left:310px;top:616px;width:79px;height:23px;line-height:23px;font-size:11.5px;">Изменить</div>
<div class="t " style="left:20px;top:661px;font-size:21px;line-height:23px;color:#444;">Суммарно</div>
<div class="r" style="left:20px;top:701px;width:350px;height:30px;background:#e6e6e6;"></div>
<div class="t " style="left:25px;top:709px;font-size:13px;line-height:15px;color:#333;font-weight:bold;">Название</div>
<div class="t " style="left:263px;top:709px;font-size:13px;line-height:15px;color:#333;font-weight:bold;">Значение</div>
<div class="r" style="left:20px;top:731px;width:350px;height:21px;background:#fff;border:1px solid #dde3ea;border-top:none;box-sizing:border-box;"></div>
<div class="r" style="left:258px;top:731px;width:1px;height:21px;background:#dde3ea;"></div>
<div class="t " style="left:25px;top:734px;font-size:13px;line-height:15px;color:#000;">Количество</div>
<div class="t " style="left:263px;top:734px;font-size:13px;line-height:15px;color:#000;">4</div>
<div class="r" style="left:20px;top:752px;width:350px;height:21px;background:#f5f9fd;border:1px solid #dde3ea;border-top:none;box-sizing:border-box;"></div>
<div class="r" style="left:258px;top:752px;width:1px;height:21px;background:#dde3ea;"></div>
<div class="t " style="left:25px;top:755px;font-size:13px;line-height:15px;color:#000;font-weight:bold;">Общая сумма</div>
<div class="t " style="left:263px;top:755px;font-size:13px;line-height:15px;color:#000;font-weight:bold;">1620.00 грн.</div>
<div class="r" style="left:20px;top:773px;width:350px;height:21px;background:#fff;border:1px solid #dde3ea;border-top:none;box-sizing:border-box;"></div>
<div class="r" style="left:258px;top:773px;width:1px;height:21px;background:#dde3ea;"></div>
<div class="t " style="left:25px;top:776px;font-size:13px;line-height:15px;color:#000;font-weight:bold;">Прибыль</div>
<div class="t " style="left:263px;top:776px;font-size:13px;line-height:15px;color:#000;font-weight:bold;">654.00 грн.</div>
<div class="r" style="left:20px;top:794px;width:350px;height:21px;background:#f5f9fd;border:1px solid #dde3ea;border-top:none;box-sizing:border-box;"></div>
<div class="r" style="left:258px;top:794px;width:1px;height:21px;background:#dde3ea;"></div>
<div class="t " style="left:25px;top:797px;font-size:13px;line-height:15px;color:#000;">Суммарно, закупочная цена</div>
<div class="t " style="left:263px;top:797px;font-size:13px;line-height:15px;color:#000;">966.00 грн.</div>
<div class="r" style="left:20px;top:815px;width:350px;height:21px;background:#fff;border:1px solid #dde3ea;border-top:none;box-sizing:border-box;"></div>
<div class="r" style="left:258px;top:815px;width:1px;height:21px;background:#dde3ea;"></div>
<div class="t " style="left:25px;top:818px;font-size:13px;line-height:15px;color:#000;">Суммарно, продажная цена</div>
<div class="t " style="left:263px;top:818px;font-size:13px;line-height:15px;color:#000;">1620.00 грн.</div></body></html>
